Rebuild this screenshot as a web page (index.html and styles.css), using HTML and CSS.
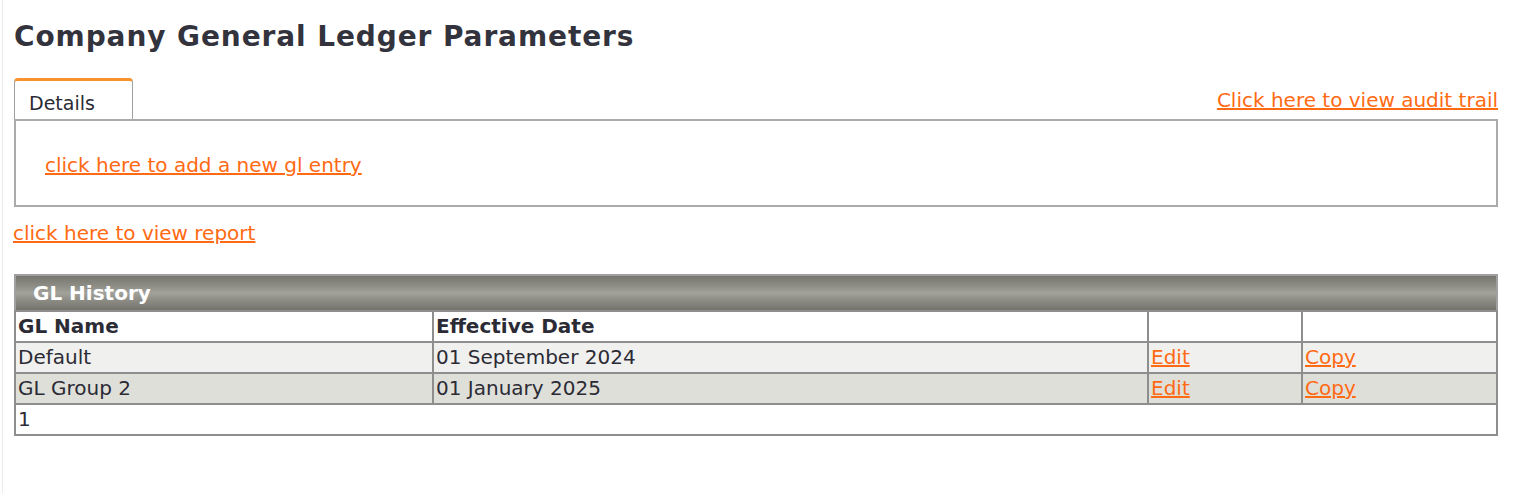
FILE: index.html
```html
<!DOCTYPE html>
<html>
<head>
<meta charset="utf-8">
<title>Company General Ledger Parameters</title>
<link rel="stylesheet" href="styles.css">
</head>
<body>
<div class="page">
  <h1 class="title">Company General Ledger Parameters</h1>
  <div class="tabbar">
    <div class="tab">Details</div>
    <a class="link audit" href="#">Click here to view audit trail</a>
  </div>
  <div class="panel">
    <a class="link" href="#">click here to add a new gl entry</a>
  </div>
  <a class="link report" href="#">click here to view report</a>
  <table class="grid">
    <thead>
      <tr><th class="caption" colspan="4">GL History</th></tr>
      <tr class="head">
        <th class="c1">GL Name</th>
        <th class="c2">Effective Date</th>
        <th class="c3"></th>
        <th class="c4"></th>
      </tr>
    </thead>
    <tbody>
      <tr class="odd">
        <td>Default</td>
        <td>01 September 2024</td>
        <td><a class="link" href="#">Edit</a></td>
        <td><a class="link" href="#">Copy</a></td>
      </tr>
      <tr class="even">
        <td>GL Group 2</td>
        <td>01 January 2025</td>
        <td><a class="link" href="#">Edit</a></td>
        <td><a class="link" href="#">Copy</a></td>
      </tr>
      <tr class="pager">
        <td colspan="4">1</td>
      </tr>
    </tbody>
  </table>
</div>
</body>
</html>
```

FILE: styles.css
```css
html, body {
  margin: 0;
  padding: 0;
  background: #ffffff;
}
body {
  font-family: "DejaVu Sans", "Liberation Sans", sans-serif;
  color: #2b2b35;
}
.page {
  margin-left: 2px;
  border-left: 1px solid #ececec;
  min-height: 493px;
  box-sizing: border-box;
  padding: 1px 22px 0 11px;
}
.title {
  margin: 18px 0 0 0;
  font-size: 28px;
  line-height: 35px;
  font-weight: bold;
  letter-spacing: 0.9px;
  color: #33333d;
}
.tabbar {
  display: flex;
  justify-content: space-between;
  align-items: flex-end;
  margin-top: 24px;
}
.tab {
  width: 119px;
  height: 41px;
  box-sizing: border-box;
  border: 1px solid #a0a0a0;
  border-top: 3px solid #f7922d;
  border-bottom: none;
  border-radius: 4px 4px 0 0;
  padding: 10px 0 0 14px;
  font-size: 19px;
  line-height: 24px;
  color: #2b2b35;
}
.link {
  color: #ff6a13;
  text-decoration: underline;
  font-size: 20px;
}
.audit {
  margin-bottom: 6px;
  line-height: 26px;
}
.panel {
  height: 88px;
  box-sizing: border-box;
  border: 2px solid #ababab;
  padding: 31px 0 0 29px;
  line-height: 26px;
}
.report {
  display: block;
  width: max-content;
  margin: 13px 0 0 -1px;
  line-height: 26px;
}
.grid {
  width: 100%;
  margin-top: 28px;
  border-collapse: collapse;
  font-size: 20px;
  border: 2px solid #a0a0a0;
}
.grid th, .grid td {
  border: 2px solid #8e8e8e;
  padding: 0 0 0 2px;
  text-align: left;
  height: 29px;
  line-height: 29px;
}
.grid .caption {
  height: 34px;
  line-height: 34px;
  padding-left: 17px;
  color: #ffffff;
  font-weight: bold;
  font-size: 20px;
  border: none;
  background: linear-gradient(#77776f 0%, #8e8e87 30%, #a2a29b 50%, #8e8e87 70%, #73736b 100%);
}
.head th {
  background: #ffffff;
  font-weight: bold;
  color: #2b2b35;
}
.c1 { width: 414px; }
.c2 { width: 711px; }
.c3 { width: 150px; }
.odd td { background: #f0f0ee; }
.even td { background: #dfdfda; }
.pager td { background: #ffffff; }
```
